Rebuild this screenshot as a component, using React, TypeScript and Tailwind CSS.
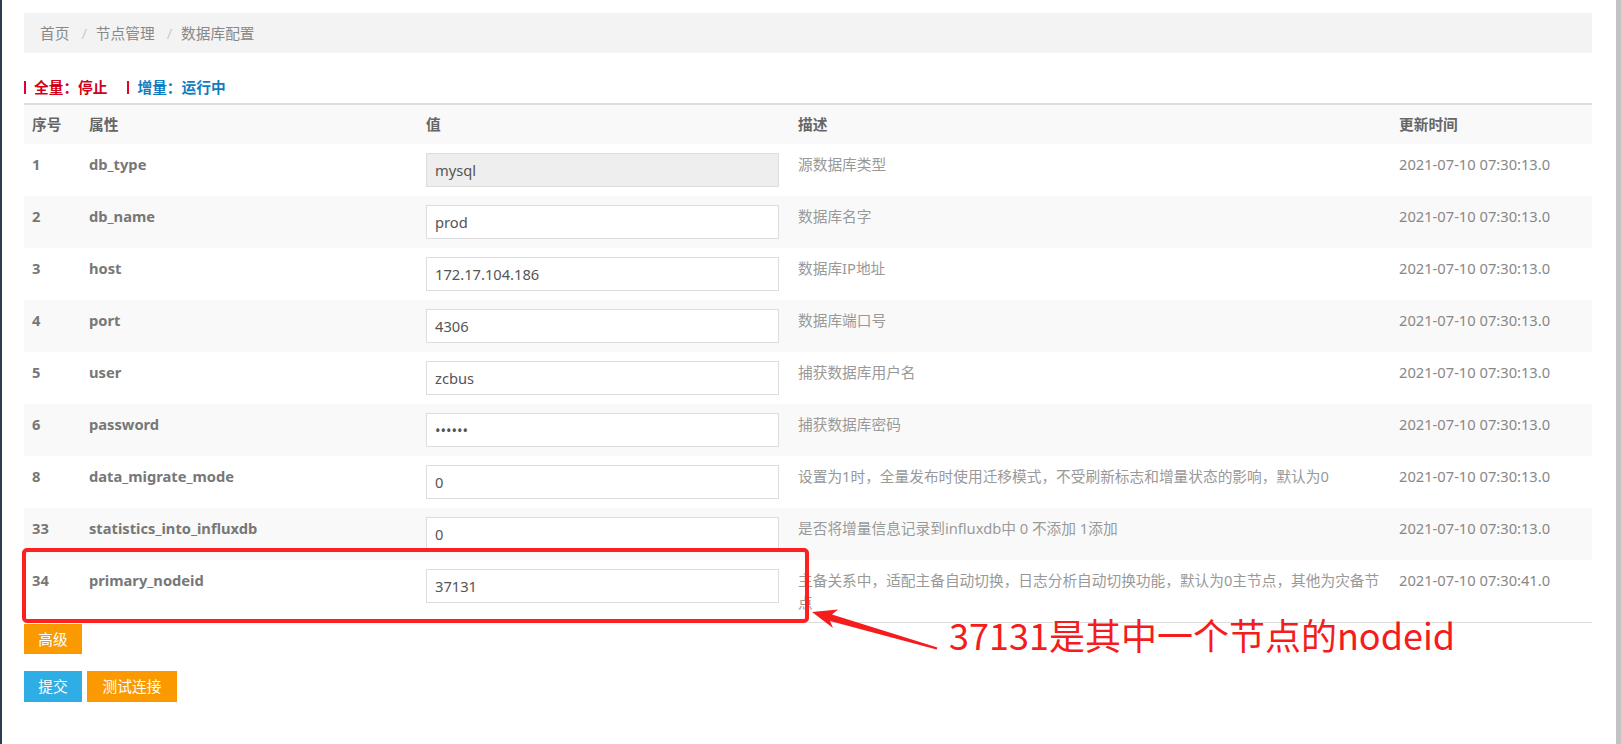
import React from 'react'

type Row = {
  no: string
  name: string
  value: string
  desc: string
  time: string
  readOnly?: boolean
  password?: boolean
}

const T = '2021-07-10 07:30:13.0'

const ROWS: Row[] = [
  { no: '1', name: 'db_type', value: 'mysql', desc: '源数据库类型', time: T, readOnly: true },
  { no: '2', name: 'db_name', value: 'prod', desc: '数据库名字', time: T },
  { no: '3', name: 'host', value: '172.17.104.186', desc: '数据库IP地址', time: T },
  { no: '4', name: 'port', value: '4306', desc: '数据库端口号', time: T },
  { no: '5', name: 'user', value: 'zcbus', desc: '捕获数据库用户名', time: T },
  { no: '6', name: 'password', value: 'zcbus1', desc: '捕获数据库密码', time: T, password: true },
  {
    no: '8',
    name: 'data_migrate_mode',
    value: '0',
    desc: '设置为1时，全量发布时使用迁移模式，不受刷新标志和增量状态的影响，默认为0',
    time: T,
  },
  {
    no: '33',
    name: 'statistics_into_influxdb',
    value: '0',
    desc: '是否将增量信息记录到influxdb中 0 不添加 1添加',
    time: T,
  },
  {
    no: '34',
    name: 'primary_nodeid',
    value: '37131',
    desc: '主备关系中，适配主备自动切换，日志分析自动切换功能，默认为0主节点，其他为灾备节点',
    time: '2021-07-10 07:30:41.0',
  },
]

function Crumbs() {
  return (
    <div className="mt-[13px] flex h-[40px] items-center bg-[#f3f3f3] px-4 leading-[22px] text-[#888]">
      <span>首页</span>
      <span className="ml-[12px] mr-[9px] text-[#ccc]">/</span>
      <span>节点管理</span>
      <span className="ml-[12px] mr-[9px] text-[#ccc]">/</span>
      <span>数据库配置</span>
    </div>
  )
}

function Status() {
  return (
    <div className="mb-[5px] mt-[23px] flex h-[22px] items-center font-bold leading-[22px]">
      <span className="h-[13px] w-[2px] bg-[#e3002b]" />
      <span className="ml-[8px] text-[#d0021b]">全量：停止</span>
      <span className="ml-[20px] h-[13px] w-[2px] bg-[#e3002b]" />
      <span className="ml-[8px] text-[#0e7dc2]">增量：运行中</span>
    </div>
  )
}

export default function App() {
  return (
    <div
      className="relative flex min-h-screen bg-white text-[14.7px]"
      style={{ fontFamily: '"Noto Sans", "Noto Sans CJK SC", sans-serif' }}
    >
      <div className="w-[2px] shrink-0 bg-[#2a3c4e]" />
      <main className="flex-1 pl-[22px] pr-[24px]">
        <Crumbs />
        <Status />
        <table className="w-full table-fixed border-collapse border-t-2 border-b border-[#ddd]">
          <colgroup>
            <col className="w-[57px]" />
            <col className="w-[337px]" />
            <col className="w-[372px]" />
            <col className="w-[601px]" />
            <col />
          </colgroup>
          <thead>
            <tr className="h-[40px] bg-[#f9f9f9] text-left font-bold text-[#666]">
              <th className="px-2 font-bold">序号</th>
              <th className="px-2 font-bold">属性</th>
              <th className="px-2 font-bold">值</th>
              <th className="px-2 font-bold">描述</th>
              <th className="px-2 font-bold">更新时间</th>
            </tr>
          </thead>
          <tbody>
            {ROWS.map((r, i) => (
              <tr key={r.no} className={i % 2 === 1 ? 'bg-[#f9f9f9]' : 'bg-white'}>
                <td className="px-2 py-[9px] align-top font-bold leading-[22px] text-[#777]">{r.no}</td>
                <td className="px-2 py-[9px] align-top font-bold leading-[22px] text-[#777]">{r.name}</td>
                <td className="px-2 py-[9px] align-top">
                  <input
                    type={r.password ? 'password' : 'text'}
                    defaultValue={r.value}
                    readOnly={r.readOnly}
                    className={`block h-[34px] w-[353px] border border-[#ddd] px-2 text-[#555] outline-none ${
                      r.readOnly ? 'bg-[#eee]' : 'bg-white'
                    }`}
                  />
                </td>
                <td className="px-2 py-[9px] align-top leading-[22px] text-[#999]">{r.desc}</td>
                <td className="px-2 py-[9px] align-top leading-[22px] text-[#888]">{r.time}</td>
              </tr>
            ))}
          </tbody>
        </table>
        <div className="mt-[1px]">
          <button className="h-[30px] w-[58px] bg-[#fb9a00] text-white">高级</button>
        </div>
        <div className="mt-[17px] flex gap-[5px]">
          <button className="h-[31px] w-[58px] bg-[#2fade5] text-white">提交</button>
          <button className="h-[31px] w-[90px] bg-[#fb9a00] text-white">测试连接</button>
        </div>
      </main>
      <div className="w-[5px] shrink-0 bg-[#c3c3c3]" />

      {/* annotation overlay */}
      <div className="pointer-events-none absolute left-[22px] top-[548px] h-[75px] w-[787px] rounded-[5px] border-[4px] border-[#ff1f1f]" />
      <svg className="pointer-events-none absolute left-[806px] top-[602px]" width="140" height="55" viewBox="0 0 140 55">
        <polygon
          points="6,10 32,7.5 26,12.5 131.4,45.4 130.6,47.4 24,19 27,26"
          fill="#f41c1c"
        />
      </svg>
      <div
        className="pointer-events-none absolute left-[949px] top-[612px] whitespace-nowrap text-[36px] leading-[44px] text-[#f41c1c]"
        style={{ fontFamily: '"Noto Sans CJK SC", sans-serif' }}
      >
        37131是其中一个节点的nodeid
      </div>
    </div>
  )
}
